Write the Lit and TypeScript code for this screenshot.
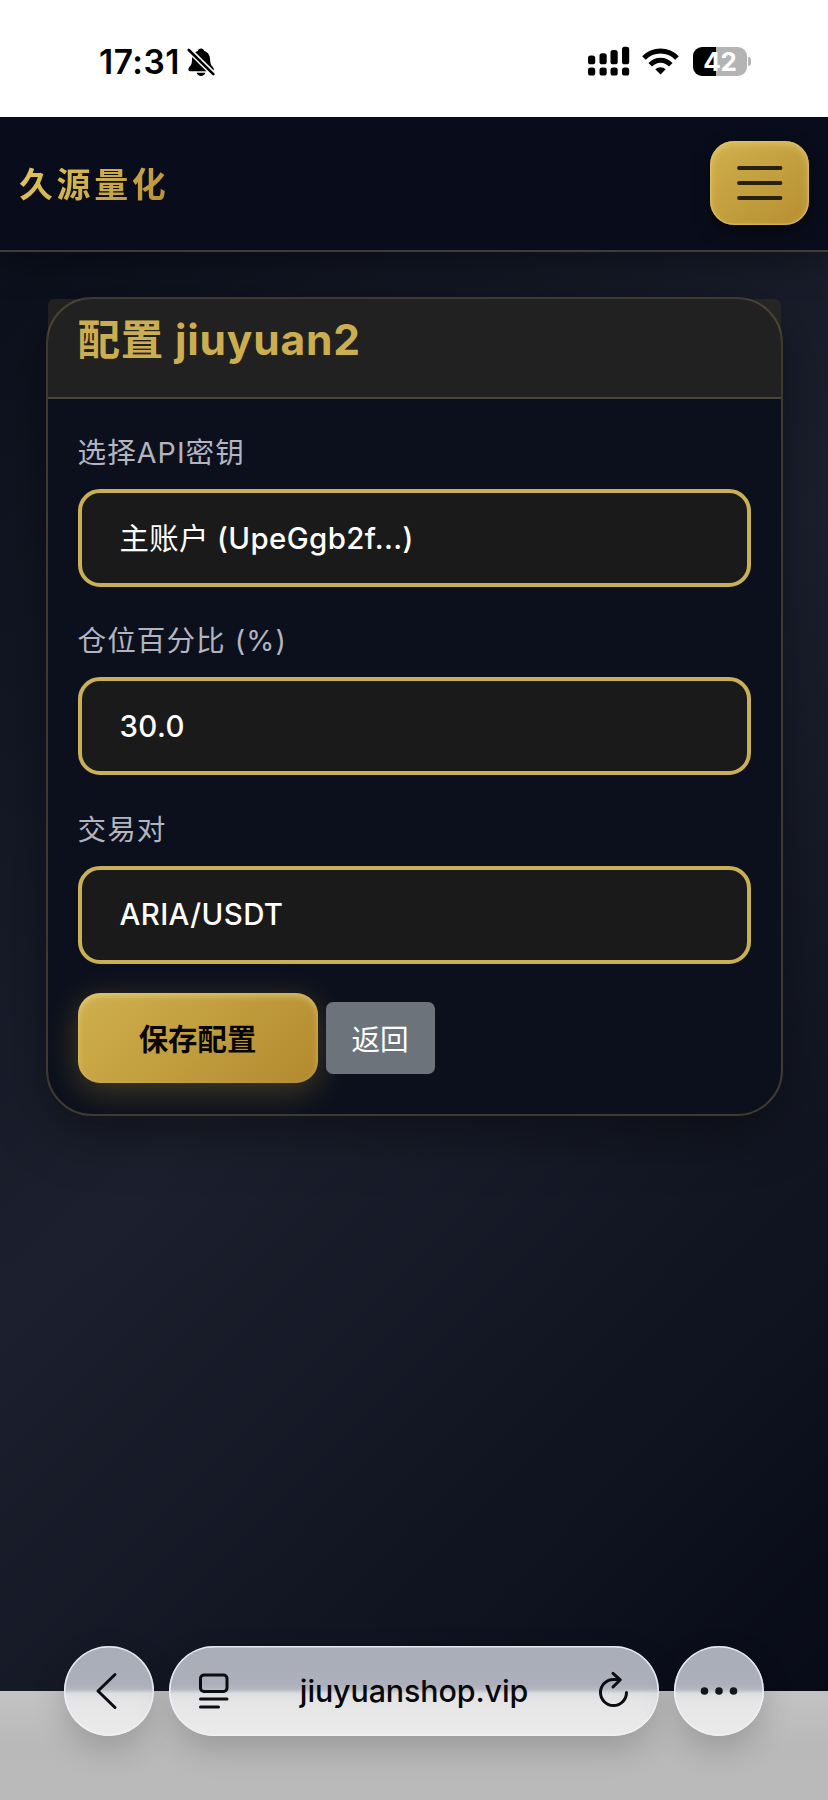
import { LitElement, html, css, svg } from "lit";
import { customElement, property } from "lit/decorators.js";

@customElement("status-bar")
class StatusBar extends LitElement {
  static styles = css`
    :host { position: relative; z-index: 1; display: flex; box-sizing: border-box; height: 117px; padding: 0 77px 0 99px; background: #fff; justify-content: space-between; align-items: flex-start; }
    .left, .right { display: flex; align-items: center; height: 34px; margin-top: 45px; }
    .right { margin-top: 44px; }
    .time { font-size: 33.5px; font-weight: 600; letter-spacing: 0.5px; color: #000; line-height: 34px; width: 88px; white-space: nowrap; }
    .right { gap: 13px; }
    .battery { display: flex; align-items: center; gap: 1px; }
    .cell { width: 54px; height: 29px; border-radius: 9px; background: linear-gradient(90deg, #000 43%, #b4b4b4 43%); color: #fff; font-weight: 700; font-size: 26px; line-height: 30px; text-align: center; letter-spacing: -0.2px; }
    .tip { width: 3px; height: 9px; border-radius: 0 4px 4px 0; background: #b4b4b4; }
    svg { display: block; }
    .wifi { margin-left: -1px; margin-right: 1px; }
  `;
  render() {
    return html`
      <div class="left">
        <span class="time">17:31</span>
        <svg width="28" height="30" viewBox="0 0 28 30">
          <path d="M14 1.500c1.700 0 2.800 1 3.200 2.400 3.700 1.200 5.800 4.300 5.900 8.300.1 5 1.400 6.300 2.900 8 1.600 2 .7 4-1.500 4H3.600c-2.300 0-3-2.200-1.400-4 1.600-1.800 2.800-3 2.800-8 .1-4 2.200-7.100 5.800-8.300C11.200 2.500 12.300 1.500 14 1.500zM9.500 25.800h9c-.6 2-2.300 3.100-4.500 3.100s-3.900-1.100-4.500-3.100z" fill="#000"/>
          <path d="M2.500 3.500L27 27.700" stroke="#fff" stroke-width="5.600"/>
          <path d="M1.800 3L26.300 27.200" stroke="#000" stroke-width="2.600" stroke-linecap="round"/>
        </svg>
      </div>
      <div class="right">
        <svg width="42" height="30" viewBox="0 0 42 30">
          ${[[0, 9.5], [11.5, 7.2], [22.5, 4], [34, 0.8]].map(([x, y]) => svg`
            <rect x=${x} y=${y} width="7.200" height=${18.3 - y} rx="2.600"/>
            <rect x=${x} y="21.500" width="7.200" height="8" rx="2.600"/>`)}
        </svg>
        <svg class="wifi" width="37" height="28" viewBox="0 0 37 28" fill="none" stroke="#000" stroke-width="5">
          <path d="M2 11C11 1.600 26 1.600 35 11"/>
          <path d="M8.200 17.700C14.300 11.600 22.700 11.600 28.800 17.700"/>
          <path d="M18.500 27.500l-5.200-5.200c3-2.900 7.400-2.900 10.400 0z" fill="#000" stroke="none"/>
        </svg>
        <div class="battery"><div class="cell">42</div><div class="tip"></div></div>
      </div>`;
  }
}

@customElement("site-header")
class SiteHeader extends LitElement {
  static styles = css`
    :host { display: flex; box-sizing: border-box; height: 135px; padding: 0 19px 1px 19px; align-items: center; justify-content: space-between; background: #090d1b; border-bottom: 2px solid #403d38; box-shadow: 0 8px 34px rgba(0, 0, 0, 0.36); }
    .brand { padding-top: 3px; font-size: 34px; line-height: 44px; font-weight: 700; letter-spacing: 3.6px; background: linear-gradient(135deg, #e3c85c 0%, #cdae4c 50%, #b58e31 100%); -webkit-background-clip: text; background-clip: text; color: transparent; }
    .menu { display: flex; align-items: center; justify-content: center; width: 99px; height: 84px; padding: 0; border: 0; border-radius: 24px; background: linear-gradient(145deg, #d0b04c, #b68e31); box-shadow: 0 6px 16px rgba(0, 0, 0, 0.5), inset 0 0 0 1.5px rgba(222, 195, 95, 0.55), inset 0 3px 8px rgba(255, 240, 160, 0.38); }
    svg { display: block; }
  `;
  render() {
    return html`
      <div class="brand">久源量化</div>
      <button class="menu" aria-label="menu">
        <svg width="46" height="36" viewBox="0 0 46 36" stroke="#292009" stroke-width="3.800" stroke-linecap="round">
          <path d="M2 3H43.500M2 18H43.500M2 33H43.500"/>
        </svg>
      </button>`;
  }
}

@customElement("form-field")
class FormField extends LitElement {
  @property() label = "";
  @property() value = "";
  static styles = css`
    :host { display: block; height: 188.3px; }
    .label { display: block; height: 58px; line-height: 42px; padding-top: 1px; box-sizing: border-box; font-size: 28.6px; letter-spacing: 1.05px; color: #b2b5c0; font-weight: 400; }
    .control { box-sizing: border-box; height: 98px; border: 4px solid #c9af55; border-radius: 22px; background: #1a1a1a; padding: 1px 38px 0; display: flex; align-items: center; color: #fff; font-size: 29.4px; line-height: 36px; font-weight: 400; letter-spacing: 0.4px; white-space: pre; }
    .latin { font-weight: 450; }
  `;
  render() {
    const [, han, latin] = /^([^\x00-\x7f]*)(.*)$/.exec(this.value)!;
    return html`<span class="label">${this.label}</span><div class="control">${han}<span class="latin">${latin}</span></div>`;
  }
}

@customElement("browser-toolbar")
class BrowserToolbar extends LitElement {
  static styles = css`
    :host { position: relative; display: flex; box-sizing: border-box; height: 109px; padding: 0 64px; gap: 15px; background: linear-gradient(#c3c3c3, #b9b9b9 50%, #bababa); }
    .glass { box-sizing: border-box; height: 90px; margin-top: -45.5px; border-radius: 46px; background: linear-gradient(#a9adb8 0, #adb0bb 43%, #b6b8c0 48%, #dedfe2 53%, #e5e5e6 62%, #ebebeb 100%); box-shadow: 0 12px 32px rgba(0, 0, 0, 0.18), inset 0 0 0 1.5px rgba(240, 241, 248, 0.85); display: flex; align-items: center; justify-content: center; }
    .round { width: 90px; flex: none; }
    .address { flex: 1; justify-content: space-between; padding: 0 30px 0 29px; }
    .url { font-size: 30.4px; font-weight: 500; color: #08090b; letter-spacing: -0.1px; line-height: 40px; padding: 1px 0 0 2px; }
    svg { display: block; fill: none; stroke: #0c0d11; stroke-width: 3; stroke-linecap: round; stroke-linejoin: round; }
    .back { margin-right: 4px; }
    .dots { fill: #15161a; stroke: none; margin-right: 1px; }
    .reload { margin-bottom: 3px; }
  `;
  render() {
    return html`
      <div class="glass round"><svg class="back" width="24" height="38" viewBox="0 0 24 38"><path d="M20 2.500L3 19L20 35.500"/></svg></div>
      <div class="glass address">
        <svg width="31" height="36" viewBox="0 0 31 36"><rect x="2.500" y="2" width="26.500" height="16.500" rx="3.500"/><path d="M2.500 26H29M2.500 34H20.500"/></svg>
        <span class="url">jiuyuanshop.vip</span>
        <svg class="reload" width="32" height="38" viewBox="0 0 32 38"><path d="M29.500 22.500A13 13 0 1 1 16.500 9.500H23M16 3.300L23.300 9.800L16 17"/></svg>
      </div>
      <div class="glass round"><svg class="dots" width="40" height="10" viewBox="0 0 40 10"><circle cx="5.500" cy="5" r="3.800"/><circle cx="20" cy="5" r="3.800"/><circle cx="34.500" cy="5" r="3.800"/></svg></div>`;
  }
}

@customElement("app-root")
class AppRoot extends LitElement {
  static styles = css`
    :host { display: flex; flex-direction: column; width: 828px; height: 1800px; overflow: hidden; font-family: Inter, "Noto Sans CJK SC", sans-serif; }
    .page { flex: 1; background: linear-gradient(135deg, #0a0e1a 0%, #1c202e 50%, #080b17 100%); }
    .card { position: relative; box-sizing: border-box; width: 737px; height: 819px; margin: 45px 0 0 45.5px; padding: 2px; border-radius: 46px; background: #0c101d; box-shadow: 0 16px 56px rgba(0, 0, 0, 0.42); }
    .card::after { content: ""; position: absolute; inset: 0; border: 2px solid rgba(124, 108, 76, 0.45); border-radius: 46px; pointer-events: none; }
    .title { box-sizing: border-box; height: 100px; border-bottom: 2px solid #4a463c; border-radius: 6px 6px 0 0; background: rgba(48, 45, 37, 0.6); padding: 15px 30px 0; font-size: 42.5px; line-height: 52px; font-weight: 700; letter-spacing: 0.8px; color: #ccae50; }
    .body { padding: 32px 30px 0 30px; }
    .actions { display: flex; align-items: center; gap: 8px; height: 91px; margin-top: -3px; }
    button { font-family: inherit; border: 0; padding: 0 0 2px; font-size: 29.4px; }
    .save { width: 240px; height: 90px; border-radius: 22px; color: #080602; font-weight: 700; background: linear-gradient(135deg, #cfb04d, #b38a2e); box-shadow: 0 8px 34px rgba(212, 175, 55, 0.28), inset 0 3px 6px rgba(255, 245, 185, 0.4); }
    .back { width: 109px; height: 72px; border-radius: 7px; background: #6c737a; color: #fff; font-size: 28.6px; }
  `;
  render() {
    return html`
      <status-bar></status-bar>
      <div class="page">
        <site-header></site-header>
        <section class="card">
          <div class="title">配置 jiuyuan2</div>
          <div class="body">
            <form-field label="选择API密钥" value="主账户 (UpeGgb2f...)"></form-field>
            <form-field label="仓位百分比 (%)" value="30.0"></form-field>
            <form-field label="交易对" value="ARIA/USDT"></form-field>
            <div class="actions"><button class="save">保存配置</button><button class="back">返回</button></div>
          </div>
        </section>
      </div>
      <browser-toolbar></browser-toolbar>`;
  }
}
